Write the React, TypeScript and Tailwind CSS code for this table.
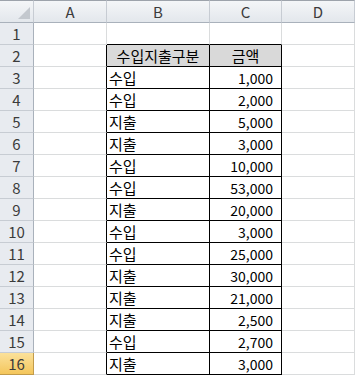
const data: [string, string][] = [
  ["수입지출구분", "금액"],
  ["수입", "1,000"],
  ["수입", "2,000"],
  ["지출", "5,000"],
  ["지출", "3,000"],
  ["수입", "10,000"],
  ["수입", "53,000"],
  ["지출", "20,000"],
  ["수입", "3,000"],
  ["수입", "25,000"],
  ["지출", "30,000"],
  ["지출", "21,000"],
  ["지출", "2,500"],
  ["수입", "2,700"],
  ["지출", "3,000"],
]

const cols = ["A", "B", "C", "D"]

function ColHeader({ label }: { label: string }) {
  return (
    <div className="h-[23px] flex items-center justify-center border-t border-r border-b border-t-[#9da3ab] border-r-[#c7ccd3] border-b-[#a9b1bb] bg-gradient-to-b from-[#f4f6f8] to-[#e3e7ec] text-[15px] text-[#3b3b3b]">
      {label}
    </div>
  )
}

export default function App() {
  // row 1 is empty, rows 2..16 hold the table
  const rowNums = Array.from({ length: 16 }, (_, i) => i + 1)

  return (
    <div className="w-[355px] h-[377px] overflow-hidden bg-white font-['Noto_Sans_CJK_KR','Malgun_Gothic',sans-serif] leading-none">
      <div className="grid grid-cols-[34px_73px_103px_72px_73px_1fr]">
        {/* corner */}
        <div className="h-[23px] relative border-t border-r border-b border-t-[#9da3ab] border-r-[#c7ccd3] border-b-[#a9b1bb] bg-gradient-to-b from-[#f4f6f8] to-[#e3e7ec]">
          <svg className="absolute right-[3px] bottom-[3px]" width="12" height="12" viewBox="0 0 12 12">
            <polygon points="12,0 12,12 0,12" fill="#c3c8ce" />
          </svg>
        </div>
        {cols.map((c) => (
          <ColHeader key={c} label={c} />
        ))}
        <div className="h-[23px] border-t border-b border-t-[#9da3ab] border-b-[#a9b1bb] bg-gradient-to-b from-[#f4f6f8] to-[#e3e7ec]" />

        {rowNums.map((n) => {
          const inTable = n >= 2 && n <= 16
          const row = inTable ? data[n - 2] : null
          const isHead = n === 2
          const active = n === 16
          return [
            <div
              key={`h${n}`}
              className={
                active
                  ? "h-[22px] flex items-center justify-center border-r border-b border-r-[#c29b4a] border-b-[#c29b4a] bg-gradient-to-b from-[#fbe19a] to-[#f4c65a] text-[15px] text-[#3b3b3b]"
                  : "h-[22px] flex items-center justify-center border-r border-b border-r-[#a9b1bb] border-b-[#c7ccd3] bg-[#e8ebf0] text-[15px] text-[#3b3b3b]"
              }
            >
              {n}
            </div>,
            <div
              key={`a${n}`}
              className={
                inTable
                  ? "h-[22px] border-r border-b border-r-black border-b-[#dadcdd]"
                  : "h-[22px] border-r border-b border-[#dadcdd]"
              }
            />,
            <div
              key={`b${n}`}
              className={
                n === 1
                  ? "h-[22px] border-r border-b border-r-[#dadcdd] border-b-black"
                  : inTable
                    ? isHead
                      ? "h-[22px] flex items-center justify-center border-r border-b border-black bg-[#d9d9d9] text-[15px] text-black"
                      : "h-[22px] flex items-center pl-[2px] border-r border-b border-black text-[15px] text-black"
                    : "h-[22px] border-r border-b border-[#dadcdd]"
              }
            >
              {row ? row[0] : null}
            </div>,
            <div
              key={`c${n}`}
              className={
                n === 1
                  ? "h-[22px] border-r border-b border-r-[#dadcdd] border-b-black"
                  : inTable
                    ? isHead
                      ? "h-[22px] flex items-center justify-center border-r border-b border-black bg-[#d9d9d9] text-[15px] text-black"
                      : "h-[22px] flex items-center justify-end pr-[8px] border-r border-b border-black text-[14px] text-black"
                    : "h-[22px] border-r border-b border-[#dadcdd]"
              }
            >
              {row ? row[1] : null}
            </div>,
            <div key={`d${n}`} className="h-[22px] border-r border-b border-[#dadcdd]" />,
            <div key={`e${n}`} className="h-[22px] border-b border-[#dadcdd]" />,
          ]
        })}
      </div>
    </div>
  )
}
